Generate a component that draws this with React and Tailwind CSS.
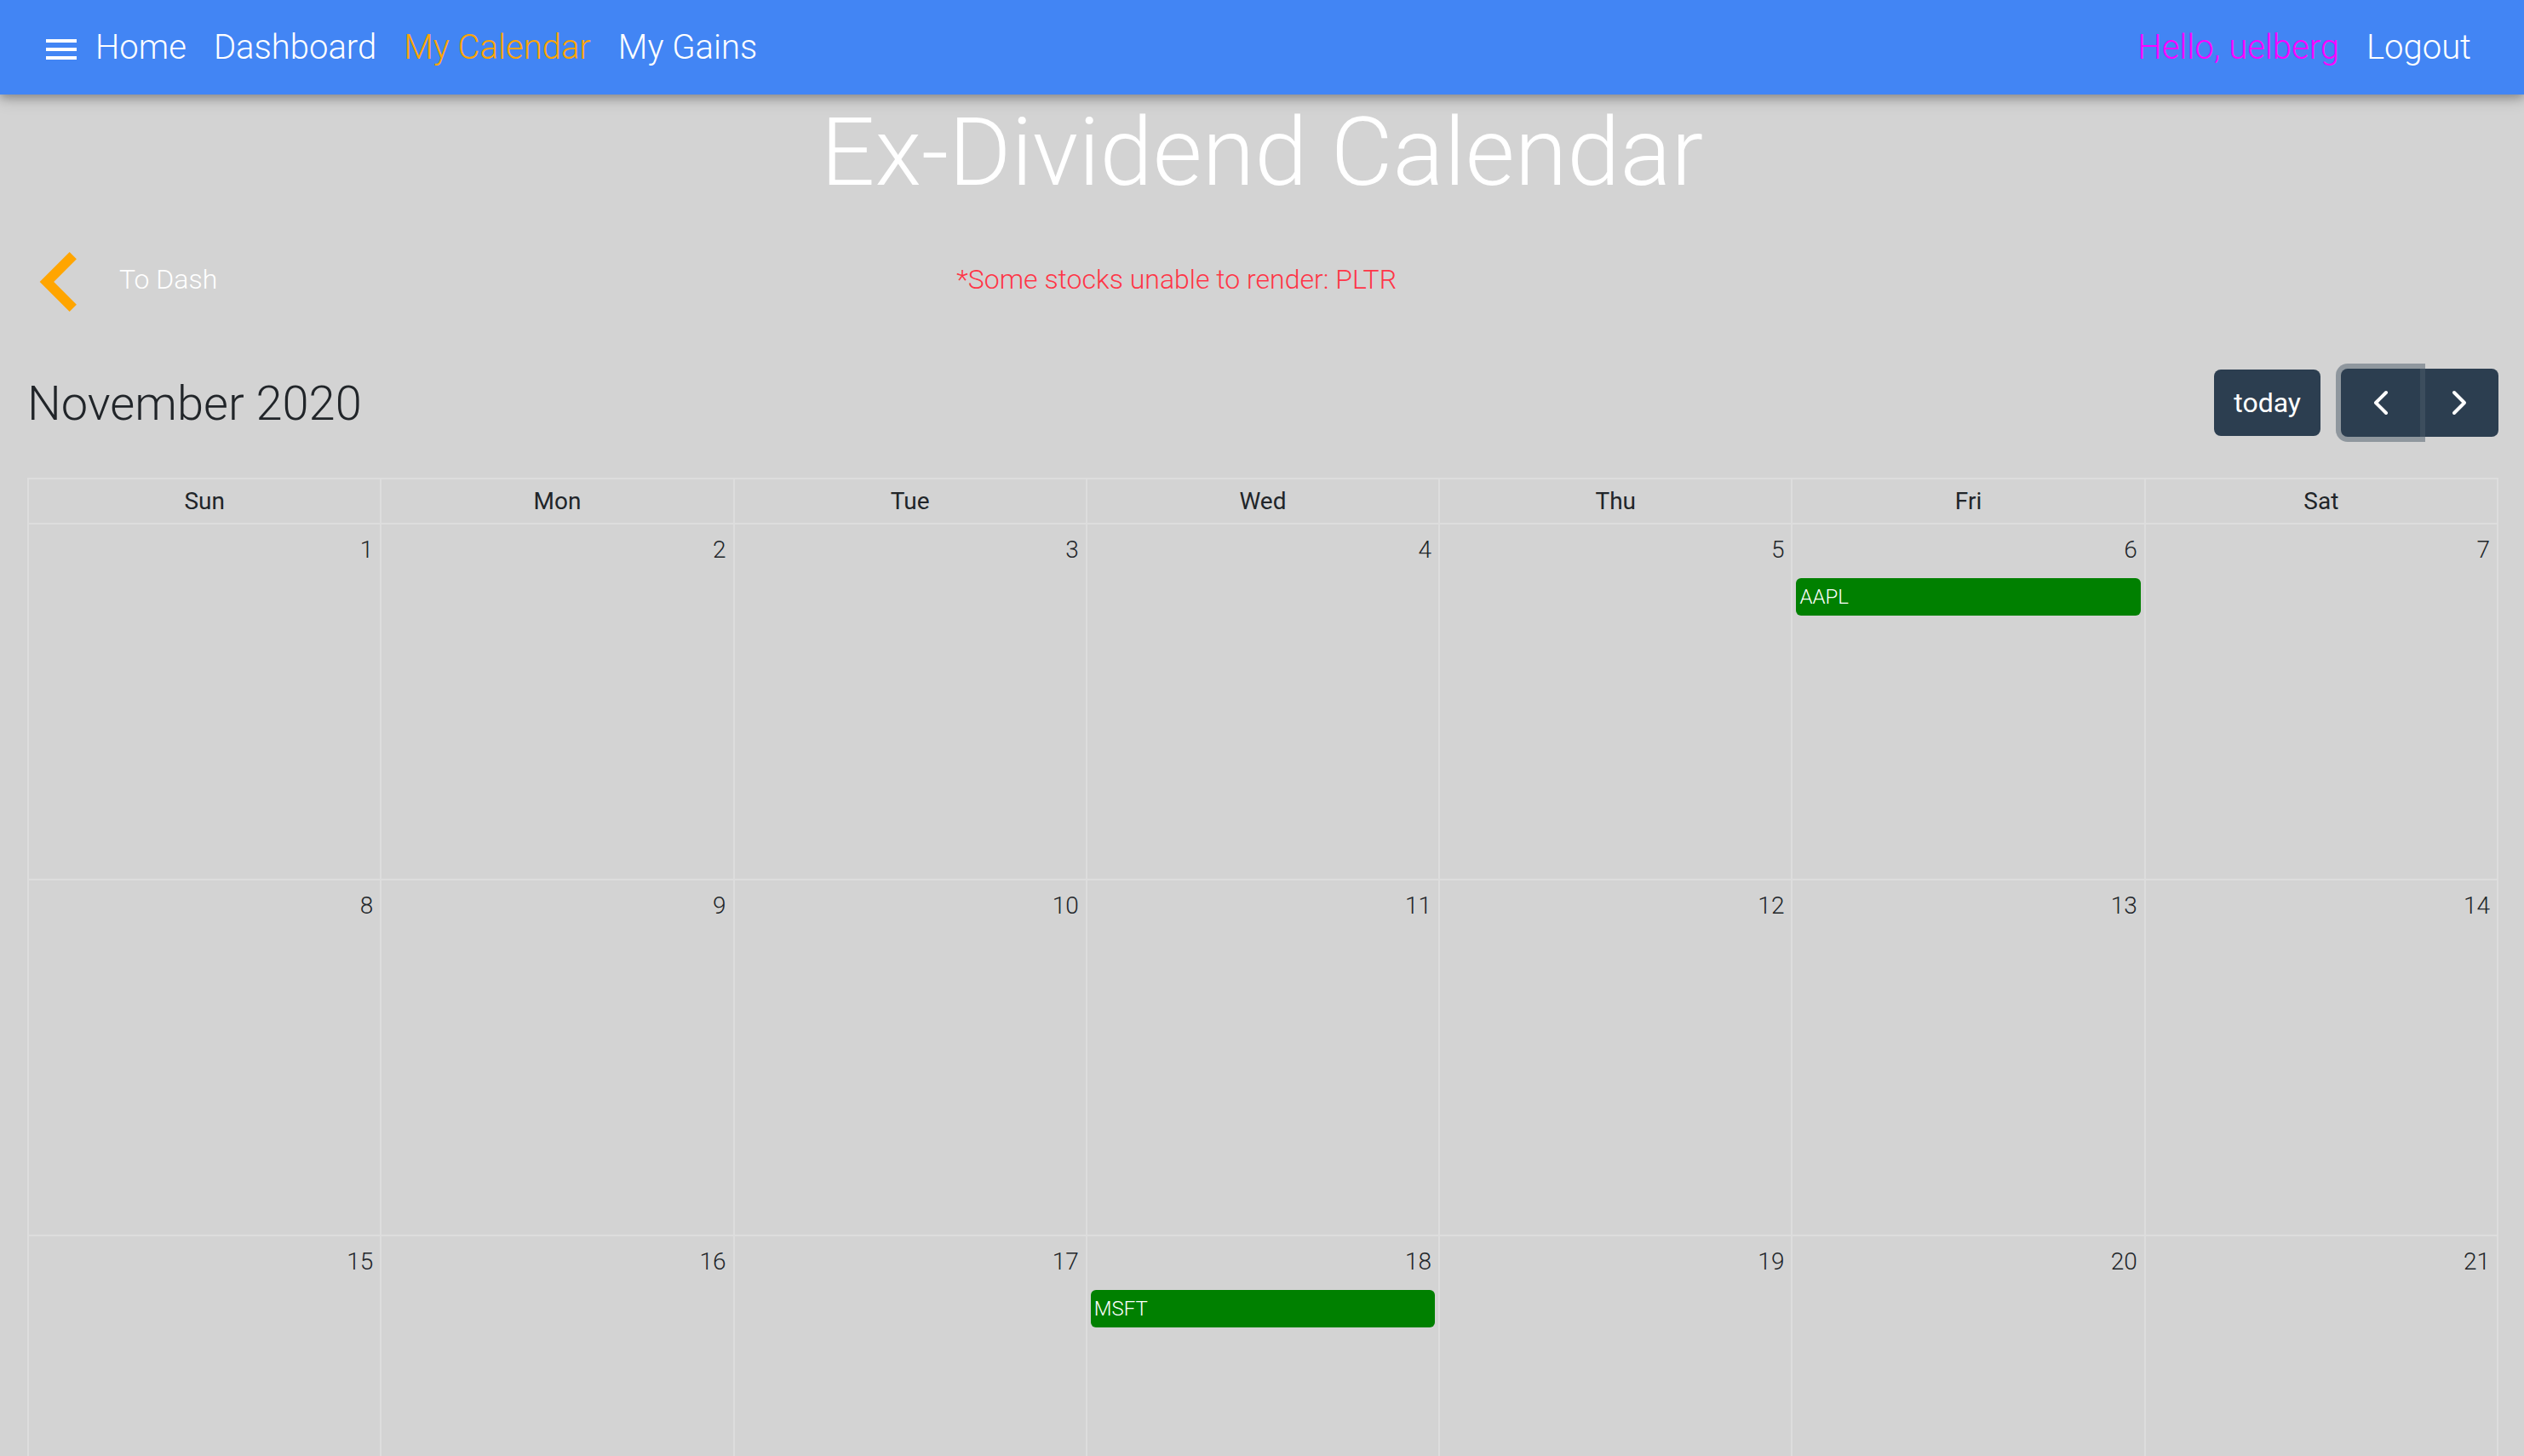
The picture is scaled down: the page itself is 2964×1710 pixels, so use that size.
const DAYS = ["Sun", "Mon", "Tue", "Wed", "Thu", "Fri", "Sat"];
const WEEKS = [0, 1, 2].map((w) => DAYS.map((_, d) => w * 7 + d + 1));
const EVENTS = { 6: "AAPL", 18: "MSFT" };

function Navbar() {
  return (
    <nav className="relative z-10 flex h-[111px] items-center bg-[#4285f4] px-12 text-[40px] leading-[60px] text-white shadow-[0_4px_10px_rgba(0,0,0,0.26),0_4px_20px_rgba(0,0,0,0.16)]">
      <button type="button" aria-label="Menu" className="pt-1">
        <svg viewBox="0 0 24 24" className="size-12 fill-white">
          <path d="M3 18h18v-2H3v2zm0-5h18v-2H3v2zm0-7v2h18V6H3z" />
        </svg>
      </button>
      <div className="ml-4 flex gap-8">
        <a href="#home">Home</a>
        <a href="#dashboard">Dashboard</a>
        <a href="#calendar" className="text-[#ffa500]">My Calendar</a>
        <a href="#gains">My Gains</a>
      </div>
      <div className="ml-auto flex gap-8 pr-3.5">
        <span className="text-[#ff00ff]">Hello, uelberg</span>
        <a href="#logout">Logout</a>
      </div>
    </nav>
  );
}

function Chevron({ d }) {
  return (
    <svg viewBox="0 0 32 32" className="size-8 fill-none stroke-white stroke-[4]" strokeLinecap="round" strokeLinejoin="round">
      <path d={d} />
    </svg>
  );
}

function Toolbar() {
  return (
    <div className="mt-8 flex items-center">
      <h2 className="pt-0.5 text-[56px] leading-[68px]">November 2020</h2>
      <button type="button" className="ml-auto h-[78px] rounded-lg bg-[#2c3e50] px-[23px] text-[32px] font-normal text-white">
        today
      </button>
      <div className="ml-6 flex h-20">
        <button
          type="button"
          aria-label="prev"
          className="relative z-10 flex w-[93px] items-center justify-center rounded-l-lg bg-[#2c3e50] shadow-[0_0_0_6px_rgba(76,91,106,0.5)]"
        >
          <Chevron d="M22 4L10 16l12 12" />
        </button>
        <button type="button" aria-label="next" className="flex w-[92px] items-center justify-center rounded-r-lg bg-[#2c3e50]">
          <Chevron d="M10 4l12 12-12 12" />
        </button>
      </div>
    </div>
  );
}

function Calendar() {
  return (
    <table className="mt-12 w-full table-fixed border-collapse">
      <thead>
        <tr>
          {DAYS.map((day) => (
            <th key={day} scope="col" className="h-[53px] border-2 border-[#ddd] p-0 text-center text-[28px] leading-[42px] font-normal">
              {day}
            </th>
          ))}
        </tr>
      </thead>
      <tbody>
        {WEEKS.map((week) => (
          <tr key={week[0]}>
            {week.map((date) => (
              <td key={date} className="h-[418px] border-2 border-[#ddd] p-0 align-top">
                <div className="px-2 pt-[9px] text-right text-[28px] leading-[42px]">{date}</div>
                {EVENTS[date] && (
                  <a href="#event" className="mx-1 mt-3 block rounded-md bg-[#008000] px-1 text-[24px] leading-[44px] text-white">
                    {EVENTS[date]}
                  </a>
                )}
              </td>
            ))}
          </tr>
        ))}
      </tbody>
    </table>
  );
}

export default function App() {
  return (
    <div className="h-screen overflow-hidden bg-[#d3d3d3] font-['Roboto',sans-serif] font-light text-[#212529]">
      <Navbar />
      <h1 className="text-center text-[112px] leading-[136px] text-white">Ex-Dividend Calendar</h1>
      <div className="mt-3.5 flex items-center text-[32px] leading-[48px]">
        <a href="#dashboard" className="flex items-center text-white">
          <svg viewBox="0 0 24 24" className="size-[140px] fill-[#ffa500]" aria-hidden="true">
            <path d="M15.41 7.41L14 6l-6 6 6 6 1.41-1.41L10.83 12z" />
          </svg>
          <span className="pb-1.5">To Dash</span>
        </a>
        <p className="flex-1 pr-[456px] pb-1.5 text-center text-[#ff3547]">*Some stocks unable to render: PLTR</p>
      </div>
      <main className="pr-[30px] pl-8">
        <Toolbar />
        <Calendar />
      </main>
    </div>
  );
}
